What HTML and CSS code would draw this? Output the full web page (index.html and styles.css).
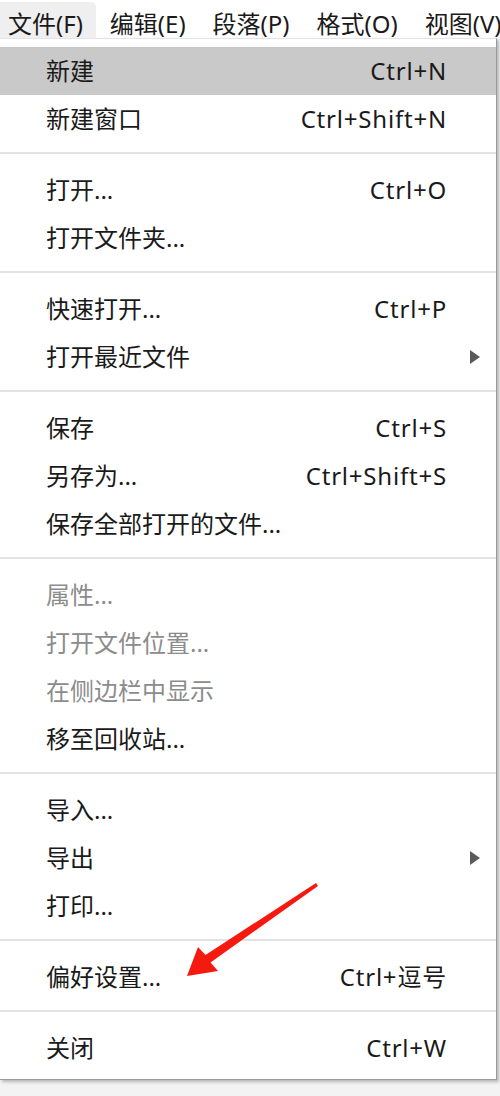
FILE: index.html
```html
<!DOCTYPE html>
<html lang="zh-CN">
<head>
<meta charset="utf-8">
<title>文件菜单</title>
<link rel="stylesheet" href="styles.css">
</head>
<body>
<div class="menubar">
  <div class="mb-item active">文件(F)</div>
  <div class="mb-item">编辑(E)</div>
  <div class="mb-item">段落(P)</div>
  <div class="mb-item">格式(O)</div>
  <div class="mb-item">视图(V)</div>
</div>
<div class="menu">
  <div class="row hover"><span class="label">新建</span><span class="key">Ctrl+N</span></div>
  <div class="row"><span class="label">新建窗口</span><span class="key">Ctrl+Shift+N</span></div>
  <div class="sep"></div>
  <div class="row"><span class="label">打开...</span><span class="key">Ctrl+O</span></div>
  <div class="row"><span class="label">打开文件夹...</span></div>
  <div class="sep"></div>
  <div class="row"><span class="label">快速打开...</span><span class="key">Ctrl+P</span></div>
  <div class="row"><span class="label">打开最近文件</span><span class="sub"></span></div>
  <div class="sep"></div>
  <div class="row"><span class="label">保存</span><span class="key">Ctrl+S</span></div>
  <div class="row"><span class="label">另存为...</span><span class="key">Ctrl+Shift+S</span></div>
  <div class="row"><span class="label">保存全部打开的文件...</span></div>
  <div class="sep"></div>
  <div class="row disabled"><span class="label">属性...</span></div>
  <div class="row disabled"><span class="label">打开文件位置...</span></div>
  <div class="row disabled"><span class="label">在侧边栏中显示</span></div>
  <div class="row"><span class="label">移至回收站...</span></div>
  <div class="sep"></div>
  <div class="row"><span class="label">导入...</span></div>
  <div class="row"><span class="label">导出</span><span class="sub"></span></div>
  <div class="row"><span class="label">打印...</span></div>
  <div class="sep"></div>
  <div class="row"><span class="label">偏好设置...</span><span class="key">Ctrl+逗号</span></div>
  <div class="sep"></div>
  <div class="row"><span class="label">关闭</span><span class="key">Ctrl+W</span></div>
</div>
<svg class="arrow" width="500" height="1096" viewBox="0 0 500 1096">
  <polygon points="187,976 198,947 205.5,955 316,883 318,886 210.5,962.5 218,971" fill="#f5190f"/>
</svg>
</body>
</html>
```

FILE: styles.css
```css
html, body {
  margin: 0;
  padding: 0;
}
body {
  width: 500px;
  height: 1096px;
  overflow: hidden;
  background: #f3f3f3;
  font-family: "Noto Sans", "Noto Sans CJK SC", sans-serif;
  font-size: 24px;
  color: #1a1a1a;
  position: relative;
}
.menubar {
  display: flex;
  height: 38px;
  background: #ffffff;
  margin-left: -5.5px;
  white-space: nowrap;
}
.mb-item {
  padding: 0 13.5px;
  margin-top: 2px;
  height: 36px;
  box-sizing: border-box;
  line-height: 44px;
}
.mb-item.active {
  background: #efeff0;
  border-top-right-radius: 5px;
}
.menu {
  width: 497px;
  box-sizing: border-box;
  background: #ffffff;
  border-top: 1px solid #e4e4e8;
  border-right: 1px solid #9a9a9a;
  border-bottom: 1px solid #9a9a9a;
  padding: 8px 0 7px 0;
  box-shadow: 2px 2px 3px rgba(0, 0, 0, 0.25);
}
.row {
  height: 48px;
  line-height: 48px;
  display: flex;
  align-items: center;
  padding-left: 46px;
  padding-right: 49px;
  position: relative;
}
.row.hover {
  background: #c9c9c9;
}
.row.disabled {
  color: #8c8c8c;
}
.label {
  flex: 1;
  white-space: nowrap;
}
.key {
  white-space: nowrap;
  letter-spacing: 0.8px;
}
.sub {
  position: absolute;
  right: 16px;
  top: 17px;
  width: 0;
  height: 0;
  border-top: 7px solid transparent;
  border-bottom: 7px solid transparent;
  border-left: 10px solid #5a5a5a;
}
.sep {
  height: 2px;
  background: #e2e2e7;
  margin: 9px 0 12px 0;
}
.arrow {
  position: absolute;
  left: 0;
  top: 0;
}
```
